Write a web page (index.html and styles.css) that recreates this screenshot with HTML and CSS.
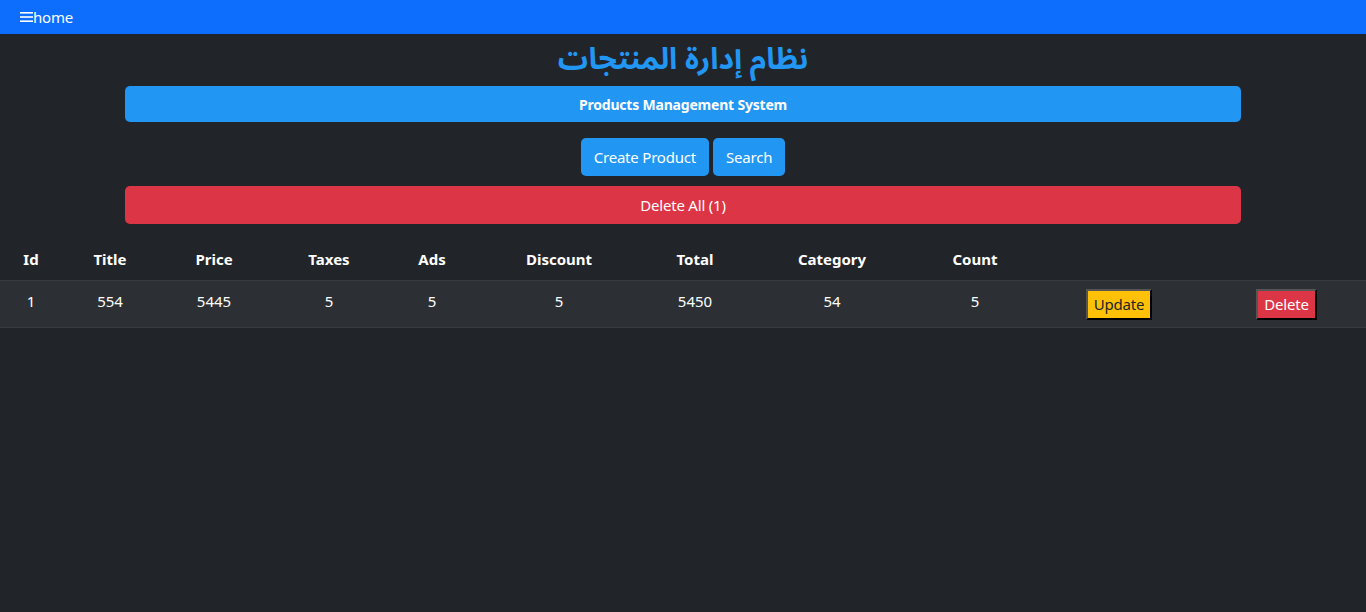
FILE: index.html
```html
<!DOCTYPE html>
<html lang="en">
<head>
<meta charset="utf-8">
<title>CRUDS</title>
<link rel="stylesheet" href="styles.css">
</head>
<body>
<nav class="navbar">
  <span class="burger"><svg width="13" height="12" viewBox="0 0 13 12"><rect x="0" y="1" width="13" height="1.6" fill="#fff"/><rect x="0" y="5.2" width="13" height="1.6" fill="#fff"/><rect x="0" y="9.4" width="13" height="1.6" fill="#fff"/></svg></span><span class="brand">home</span>
</nav>
<main class="container">
  <h1 class="title" lang="ar" dir="rtl">نظام إدارة المنتجات</h1>
  <div class="banner">Products Management System</div>
  <div class="actions">
    <button class="btn btn-blue">Create Product</button>
    <button class="btn btn-blue">Search</button>
  </div>
  <button class="btn-delete-all">Delete All (1)</button>
</main>
<table class="table">
  <colgroup>
    <col style="width:62px"><col style="width:96px"><col style="width:112px"><col style="width:118px"><col style="width:88px"><col style="width:166px"><col style="width:106px"><col style="width:168px"><col style="width:118px"><col style="width:172px"><col style="width:160px">
  </colgroup>
  <thead>
    <tr><th>Id</th><th>Title</th><th>Price</th><th>Taxes</th><th>Ads</th><th>Discount</th><th>Total</th><th>Category</th><th>Count</th><th></th><th></th></tr>
  </thead>
  <tbody>
    <tr><td>1</td><td>554</td><td>5445</td><td>5</td><td>5</td><td>5</td><td>5450</td><td>54</td><td>5</td><td class="btn-cell"><button class="row-btn update">Update</button></td><td class="btn-cell"><button class="row-btn delete">Delete</button></td></tr>
  </tbody>
</table>
</body>
</html>
```
FILE: styles.css
```css
* { box-sizing: border-box; }
html, body { margin: 0; padding: 0; }
body {
  background: #212529;
  color: #fff;
  font-family: "Noto Sans", Roboto, sans-serif;
  min-height: 612px;
}
.navbar {
  height: 34px;
  background: #0d6efd;
  display: flex;
  align-items: center;
  padding-left: 20px;
}
.burger { display: flex; align-items: center; }
.brand { font-size: 15px; color: #fff; letter-spacing: -0.2px; }
.container {
  width: 1140px;
  margin: 0 auto;
  padding: 0 12px;
  display: flex;
  flex-direction: column;
  align-items: center;
}
.title {
  margin: 8px 0 0;
  height: 44px;
  line-height: 36px;
  font-size: 30px;
  font-weight: 700;
  color: #2196f3;
  font-family: "Noto Sans Arabic", "Noto Kufi Arabic", "DejaVu Sans", sans-serif;
}
.banner {
  width: 100%;
  height: 36px;
  background: #2196f3;
  border-radius: 5px;
  display: flex;
  align-items: center;
  justify-content: center;
  font-weight: 700;
  font-size: 14px;
  letter-spacing: -0.2px;
}
.actions {
  margin-top: 16px;
  display: flex;
  gap: 4px;
}
.btn {
  height: 38px;
  border: none;
  border-radius: 5px;
  color: #fff;
  font-family: inherit;
  font-size: 15px;
  padding: 0 13px;
  letter-spacing: -0.2px;
}
.btn-blue { background: #2196f3; }
.btn-delete-all {
  margin-top: 10px;
  width: 100%;
  height: 38px;
  border: none;
  border-radius: 5px;
  background: #dc3545;
  color: #fff;
  font-family: inherit;
  font-size: 15px;
  letter-spacing: -0.2px;
}
.table {
  margin-top: 16px;
  width: 1366px;
  border-collapse: collapse;
  table-layout: fixed;
}
.table th, .table td {
  text-align: center;
  padding: 0;
  border-bottom: 1px solid #373b3e;
  font-size: 15px;
}
.table th { height: 40px; font-weight: 700; padding-bottom: 1px; vertical-align: middle; }
.table td { height: 47px; background: #2c3034; vertical-align: top; padding-top: 10px; line-height: 20px; }
.table td.btn-cell { padding-top: 8px; }
.row-btn {
  font-family: inherit;
  font-size: 15px;
  height: 31px;
  padding: 0 6px;
  border: 2px solid;
  border-color: #555 #000 #000 #555;
  letter-spacing: -0.2px;
  line-height: 27px;
}
.update { background: #ffc107; color: #212529; margin-left: -2px; }
.delete { background: #dc3545; color: #fff; margin-left: 1px; }
```
